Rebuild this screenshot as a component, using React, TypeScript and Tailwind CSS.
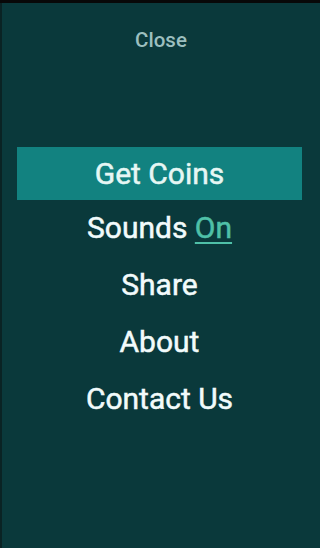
export default function App() {
  const font = { fontFamily: "Roboto, 'Noto Sans', sans-serif" };
  return (
    <div className="w-[320px] h-[548px] bg-[#050f10] flex flex-col" style={font}>
      <div className="h-[3px] bg-[#080808]" />
      <div className="flex-1 flex bg-[#0a393b]">
        <div className="w-[2px] bg-[#0a2324]" />
        <div className="flex-1 flex flex-col">
          <div className="h-[72px] flex items-center justify-center pt-[2px]">
            <span className="text-[20.5px] font-medium text-[#9cbfbf]">Close</span>
          </div>
          <div className="h-[72px]" />
          <div className="mx-[15px] mr-[18px] h-[53px] bg-[#128280] flex items-center justify-center">
            <span className="text-[30px] text-[#e6f7f4] [-webkit-text-stroke:0.5px_#e6f7f4]">Get Coins</span>
          </div>
          <div className="h-[57px] flex items-center justify-center pr-[3px] pb-[2px]">
            <span className="text-[30px] text-[#f2fbfb] [-webkit-text-stroke:0.5px_currentColor]">
              Sounds <span className="text-[#4fc0a8] underline underline-offset-[4px] decoration-[2px]">On</span>
            </span>
          </div>
          <div className="h-[57px] flex items-center justify-center pr-[3px] pb-[2px]">
            <span className="text-[30px] text-[#f2fbfb] [-webkit-text-stroke:0.5px_#f2fbfb]">Share</span>
          </div>
          <div className="h-[57px] flex items-center justify-center pr-[3px] pb-[2px]">
            <span className="text-[30px] text-[#f2fbfb] [-webkit-text-stroke:0.5px_#f2fbfb]">About</span>
          </div>
          <div className="h-[57px] flex items-center justify-center pr-[3px] pb-[2px]">
            <span className="text-[30px] text-[#f2fbfb] [-webkit-text-stroke:0.5px_#f2fbfb]">Contact Us</span>
          </div>
        </div>
      </div>
    </div>
  );
}
